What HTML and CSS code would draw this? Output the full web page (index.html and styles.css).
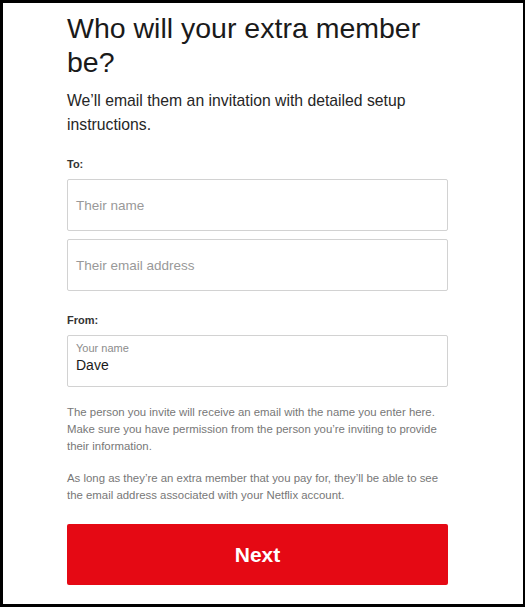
FILE: index.html
```html
<!DOCTYPE html>
<html>
<head>
<meta charset="utf-8">
<link rel="stylesheet" href="styles.css">
</head>
<body>
<div class="frame">
  <main class="content">
    <h1 class="title">Who will your extra member be?</h1>
    <p class="subtitle">We’ll email them an invitation with detailed setup instructions.</p>
    <div class="label to">To:</div>
    <div class="field"><span class="placeholder">Their name</span></div>
    <div class="field second"><span class="placeholder">Their email address</span></div>
    <div class="label from">From:</div>
    <div class="field filled">
      <span class="float-label">Your name</span>
      <span class="value">Dave</span>
    </div>
    <p class="note first">The person you invite will receive an email with the name you enter here. Make sure you have permission from the person you’re inviting to provide their information.</p>
    <p class="note second-note">As long as they’re an extra member that you pay for, they’ll be able to see the email address associated with your Netflix account.</p>
    <button class="next">Next</button>
  </main>
</div>
</body>
</html>
```
FILE: styles.css
```css
html, body {
  margin: 0;
  padding: 0;
  background: #000;
}
body {
  width: 525px;
  height: 607px;
  overflow: hidden;
  font-family: "Liberation Sans", Arial, sans-serif;
}
.frame {
  margin: 3px 2px 3px 3px;
  height: 601px;
  background: #fff;
  overflow: hidden;
}
.content {
  width: 381px;
  margin-left: 64px;
  padding-top: 8px;
}
.title {
  margin: 0;
  font-size: 28.5px;
  font-weight: 400;
  line-height: 34px;
  color: #1a1a1a;
}
.subtitle {
  margin: 10px 0 0;
  font-size: 15.75px;
  line-height: 24px;
  color: #262626;
}
.label {
  font-size: 11px;
  font-weight: 700;
  color: #333;
  line-height: 16px;
}
.to { margin-top: 19px; }
.from { margin-top: 21px; }
.field {
  box-sizing: border-box;
  margin-top: 7px;
  height: 52px;
  border: 1px solid #d2d2d2;
  border-radius: 2px;
  padding: 0 8px;
  display: flex;
  flex-direction: column;
  justify-content: center;
}
.field.second { margin-top: 8px; }
.placeholder {
  font-size: 13.5px;
  color: #999;
}
.field.filled {
  justify-content: flex-start;
  padding-top: 5px;
}
.float-label {
  font-size: 11px;
  color: #8c8c8c;
  line-height: 14px;
}
.value {
  font-size: 14px;
  color: #1a1a1a;
  line-height: 18px;
  margin-top: 1px;
}
.note {
  margin: 0;
  font-size: 11.4px;
  line-height: 17px;
  color: #777;
}
.note.first { margin-top: 17px; }
.note.second-note { margin-top: 15px; }
.next {
  display: block;
  width: 100%;
  height: 61px;
  margin-top: 20px;
  border: 0;
  border-radius: 2px;
  background: #e50914;
  color: #fff;
  font-family: "Liberation Sans", Arial, sans-serif;
  font-size: 21px;
  font-weight: 700;
}
```
